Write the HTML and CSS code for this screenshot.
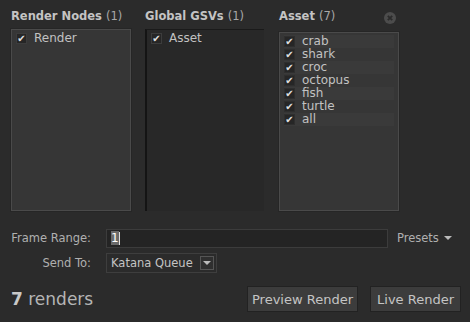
FILE: index.html
```html
<!DOCTYPE html>
<html lang="en">
<head>
    <meta charset="UTF-8">
    <title>Render</title>
    <link rel="stylesheet" href="styles.css">
</head>
<body>
    <div class="panels">
        <div class="column">
            <div class="col-title"><b>Render Nodes</b> (1)</div>
            <div class="list list-light">
                <div class="item"><span class="check">&#10004;</span>Render</div>
            </div>
        </div>
        <div class="column">
            <div class="col-title"><b>Global GSVs</b> (1)</div>
            <div class="list list-dark">
                <div class="item"><span class="check">&#10004;</span>Asset</div>
            </div>
        </div>
        <div class="column">
            <div class="col-title"><b>Asset</b> (7)
                <span class="close">
                    <svg width="12" height="12" viewBox="0 0 12 12">
                        <circle cx="6" cy="6" r="6" fill="#4c4c4c"/>
                        <path d="M3.8 3.8 L8.2 8.2 M8.2 3.8 L3.8 8.2" stroke="#2b2b2b" stroke-width="1.8"/>
                    </svg>
                </span>
            </div>
            <div class="list list-light list-asset">
                <div class="item"><span class="check">&#10004;</span>crab</div>
                <div class="item"><span class="check">&#10004;</span>shark</div>
                <div class="item"><span class="check">&#10004;</span>croc</div>
                <div class="item"><span class="check">&#10004;</span>octopus</div>
                <div class="item"><span class="check">&#10004;</span>fish</div>
                <div class="item"><span class="check">&#10004;</span>turtle</div>
                <div class="item"><span class="check">&#10004;</span>all</div>
            </div>
        </div>
    </div>

    <div class="form-row">
        <label class="label">Frame Range:</label>
        <div class="text-input"><span class="sel">1</span><span class="caret"></span></div>
        <div class="presets">Presets <span class="tri"></span></div>
    </div>
    <div class="form-row">
        <label class="label">Send To:</label>
        <div class="select">Katana Queue <span class="drop"><span class="tri"></span></span></div>
    </div>

    <div class="footer">
        <div class="count"><b>7</b> renders</div>
        <button class="btn">Preview Render</button>
        <button class="btn btn-live">Live Render</button>
    </div>
</body>
</html>
```

FILE: styles.css
```css
body {
    margin: 0;
    padding: 0;
    background-color: #2b2b2b;
    color: #bdbdbd;
    font-family: "DejaVu Sans", Verdana, sans-serif;
    font-size: 11px;
    width: 470px;
    height: 322px;
    overflow: hidden;
}
.panels {
    display: flex;
    gap: 14px;
    padding: 9px 0 0 11px;
}
.column {
    width: 120px;
    display: flex;
    flex-direction: column;
}
.col-title {
    height: 20px;
    font-size: 11.5px;
    color: #a8a8a8;
    display: flex;
    align-items: flex-start;
    white-space: nowrap;
}
.col-title b {
    color: #c4c4c4;
    margin-right: 4px;
}
.close {
    margin-left: auto;
    margin-right: 3px;
    margin-top: 3px;
    line-height: 0;
}
.list {
    height: 182px;
    box-sizing: border-box;
    padding: 2px 4px;
}
.list-light {
    background-color: #363636;
    border: 1px solid #4a4a4a;
    box-shadow: 0 0 0 1px #262626;
}
.list-dark {
    background-color: #282828;
    border-top: 1px solid #1a1a1a;
    border-left: 2px solid #141414;
    width: 119px;
}
.list-asset {
    margin-top: 3px;
    height: 179px;
    padding: 2px 4px;
}
.item {
    height: 13px;
    line-height: 13px;
    display: flex;
    align-items: center;
    color: #c2c2c2;
    font-size: 12px;
}
.list-asset .item:nth-child(odd) {
    background-color: #3a3a3a;
}
.check {
    width: 11px;
    height: 11px;
    background-color: #262626;
    border: 1px solid #3c3c3c;
    box-sizing: border-box;
    color: #e0e0e0;
    font-size: 10px;
    line-height: 10px;
    text-align: center;
    margin-right: 7px;
    overflow: hidden;
}
.list-asset .check {
    border-color: #2e2e2e;
}
.form-row {
    display: flex;
    align-items: center;
    margin-top: 5px;
    height: 20px;
}
.panels + .form-row {
    margin-top: 17px;
}
.label {
    width: 91px;
    text-align: right;
    margin-right: 15px;
    color: #b0b0b0;
    font-size: 11.5px;
}
.text-input {
    width: 282px;
    height: 19px;
    box-sizing: border-box;
    background-color: #242424;
    border: 1px solid #3c3c3c;
    display: flex;
    align-items: center;
    padding-left: 4px;
    color: #d0d0d0;
    font-size: 12px;
}
.sel {
    background-color: #6a6a6a;
    color: #fff;
    line-height: 14px;
}
.caret {
    width: 1px;
    height: 13px;
    background-color: #ddd;
}
.presets {
    margin-left: 9px;
    color: #b0b0b0;
    font-size: 11.5px;
    display: flex;
    align-items: center;
}
.tri {
    display: inline-block;
    width: 0;
    height: 0;
    border-left: 4px solid transparent;
    border-right: 4px solid transparent;
    border-top: 4px solid #bbb;
    margin-left: 5px;
}
.select {
    width: 111px;
    height: 20px;
    box-sizing: border-box;
    border: 1px solid #3e3e3e;
    display: flex;
    align-items: center;
    padding-left: 4px;
    color: #c4c4c4;
    font-size: 11.5px;
}
.drop {
    margin-left: auto;
    margin-right: 2px;
    width: 14px;
    height: 14px;
    box-sizing: border-box;
    border: 1px solid #555;
    background-color: #2f2f2f;
    display: flex;
    align-items: center;
    justify-content: center;
}
.drop .tri {
    margin-left: 0;
}
.footer {
    display: flex;
    align-items: center;
    padding: 0 9px 0 11px;
    margin-top: 13px;
}
.count {
    font-size: 17px;
    color: #b5b5b5;
}
.count b {
    color: #c8c8c8;
}
.btn {
    font-family: "DejaVu Sans", Verdana, sans-serif;
    font-size: 13px;
    color: #c4c4c4;
    background-color: #3c3c3c;
    border: 1px solid #222;
    height: 26px;
    padding: 0 4px;
    margin-left: 12px;
}
.btn-live {
    padding: 0 6px;
}
.count + .btn {
    margin-left: auto;
}
```
